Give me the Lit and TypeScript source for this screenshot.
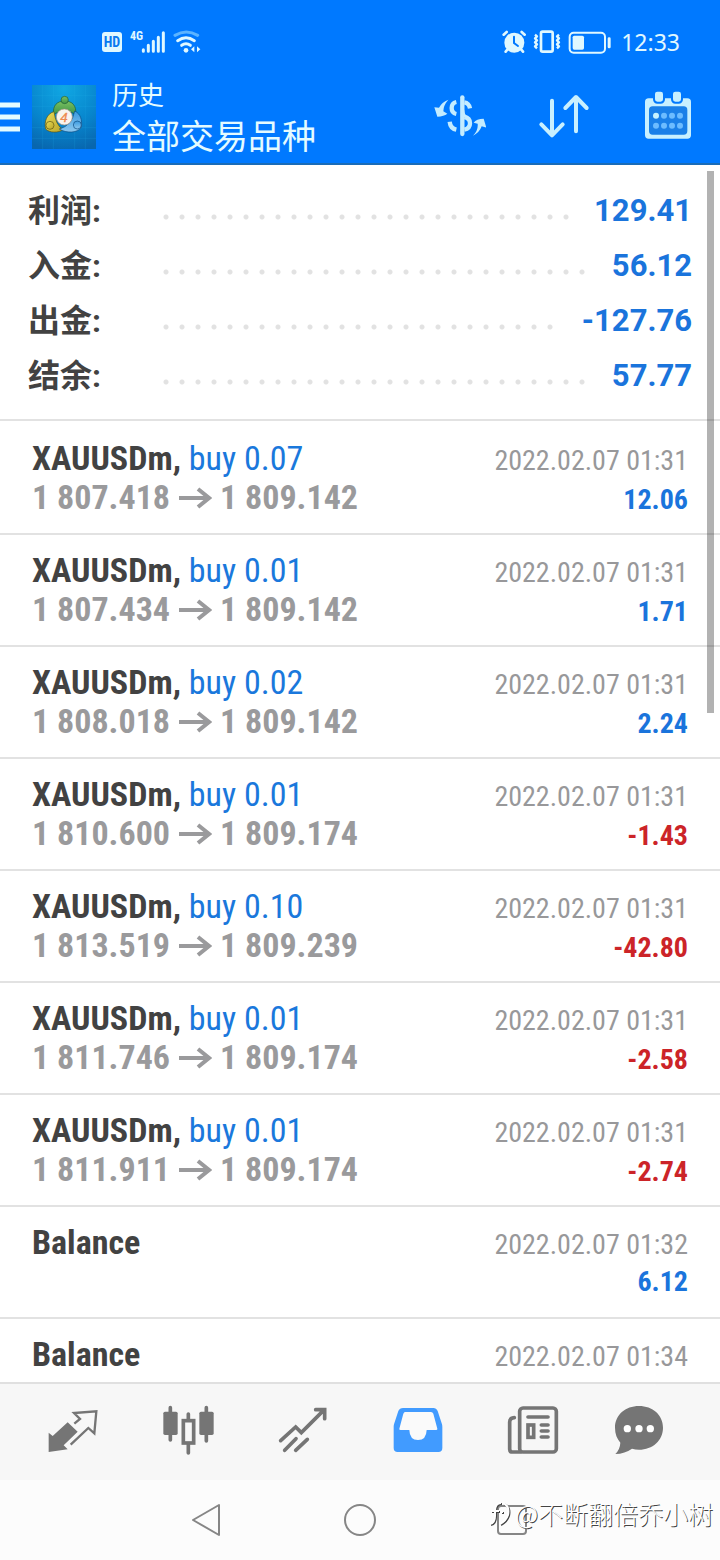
import { LitElement, html, css, svg, nothing } from "lit";
import { customElement, property } from "lit/decorators.js";
import { classMap } from "lit/directives/class-map.js";

interface Deal {
  symbol: string;
  side?: string;
  open?: string;
  close?: string;
  time: string;
  profit?: string;
}

const totals = [
  { label: "利润:", value: "129.41" },
  { label: "入金:", value: "56.12" },
  { label: "出金:", value: "-127.76" },
  { label: "结余:", value: "57.77" },
];

const gold = (side: string, open: string, close: string, profit: string): Deal => ({
  symbol: "XAUUSDm",
  side,
  open,
  close,
  time: "2022.02.07 01:31",
  profit,
});

const deals: Deal[] = [
  gold("buy 0.07", "1 807.418", "1 809.142", "12.06"),
  gold("buy 0.01", "1 807.434", "1 809.142", "1.71"),
  gold("buy 0.02", "1 808.018", "1 809.142", "2.24"),
  gold("buy 0.01", "1 810.600", "1 809.174", "-1.43"),
  gold("buy 0.10", "1 813.519", "1 809.239", "-42.80"),
  gold("buy 0.01", "1 811.746", "1 809.174", "-2.58"),
  gold("buy 0.01", "1 811.911", "1 809.174", "-2.74"),
  { symbol: "Balance", time: "2022.02.07 01:32", profit: "6.12" },
  { symbol: "Balance", time: "2022.02.07 01:34" },
];

@customElement("status-bar")
class StatusBar extends LitElement {
  static styles = css`
    :host {
      display: flex;
      justify-content: space-between;
      align-items: center;
      height: 60px;
      padding: 12px 40px 0 101px;
      color: #e0f8ff;
      font: 23px/32px "Noto Sans", sans-serif;
    }
    .group {
      display: flex;
      align-items: center;
      gap: 7px;
    }
    svg {
      display: block;
      flex: none;
    }
    .tag {
      font: bold 14px "Roboto Condensed", "Roboto", sans-serif;
    }
    .time {
      margin-left: 2px;
    }
  `;

  render() {
    return html`
      <div class="group">
        <svg width="22" height="24" viewBox="0 0 22 24" aria-label="HD">
          <rect x="1" y="2" width="20" height="20" rx="3" fill="#e0f8ff" />
          <text class="tag" x="11" y="17" text-anchor="middle" fill="#0a7af0">HD</text>
        </svg>
        <svg width="36" height="32" viewBox="390 76 108 96" aria-label="4G">
          <text x="390" y="118" font-family="Roboto Condensed, Roboto, sans-serif" font-size="36" font-weight="bold" fill="#e0f8ff">4G</text>
          <g stroke="#e0f8ff" stroke-width="9" stroke-linecap="round">
            <path d="M430 147v5M445 134v18M460 122v30M475 110v42M490 96v56" />
          </g>
        </svg>
        <svg width="28" height="24" viewBox="516 88 84 72" aria-label="Wi-Fi">
          <g fill="none" stroke-width="9" stroke-linecap="round">
            <path d="M522 104q34-20 68 0" stroke="#5cb4ff" />
            <path d="M530 120q25-17 50 0M542 134q13-9 26 0" stroke="#e0f8ff" />
          </g>
          <circle cx="555" cy="149" r="7" fill="#e0f8ff" />
          <path d="M580 137v18l-10-9zM588 137v18l10-9z" fill="#e0f8ff" />
        </svg>
      </div>
      <div class="group">
        <svg width="24" height="24" viewBox="430 88 72 72" aria-label="Alarm">
          <circle cx="467" cy="126" r="30" fill="#e0f8ff" />
          <g fill="none" stroke="#e0f8ff" stroke-width="8" stroke-linecap="round">
            <path d="M435 102l9-8M498 102l-9-8M446 147l-5 6M488 147l5 6" />
          </g>
          <path d="M466 108v19l12 9" fill="none" stroke="#0079ff" stroke-width="6" stroke-linecap="round" />
        </svg>
        <svg width="28" height="24" viewBox="523 88 84 72" aria-label="Vibrate">
          <g fill="none" stroke="#e0f8ff" stroke-width="8" stroke-linejoin="round">
            <rect x="547" y="93" width="35" height="60" rx="5" />
            <path d="M529 102l6 5-6 6 6 6-6 6 6 6-6 6 6 6M601 102l-6 5 6 6-6 6 6 6-6 6 6 6-6 6" stroke-width="7" />
          </g>
        </svg>
        <svg width="44" height="24" viewBox="628 88 132 72" aria-label="Battery">
          <rect x="633" y="96" width="106" height="60" rx="12" fill="none" stroke="#e0f8ff" stroke-width="6" />
          <rect x="642" y="105" width="34" height="42" rx="5" fill="#e0f8ff" />
          <rect x="747" y="110" width="9" height="33" rx="4" fill="#e0f8ff" />
        </svg>
        <span class="time">12:33</span>
      </div>
    `;
  }
}

@customElement("app-toolbar")
class AppToolbar extends LitElement {
  static styles = css`
    :host {
      display: flex;
      align-items: center;
      height: 90px;
      padding: 0 26px 1px 0;
      color: #e4fbff;
      font-family: "Noto Sans CJK SC", sans-serif;
    }
    button {
      flex: none;
      padding: 0;
      border: 0;
      background: none;
      color: inherit;
    }
    svg {
      display: block;
    }
    .logo {
      flex: none;
      margin-left: 12px;
    }
    .titles {
      flex: 1;
      margin-left: 16px;
      padding-bottom: 2px;
      white-space: nowrap;
    }
    h1,
    p {
      margin: 0;
      font-weight: 400;
    }
    h1 {
      font-size: 26px;
      line-height: 38px;
    }
    p {
      font-size: 34px;
      line-height: 44px;
    }
    .actions {
      display: flex;
      gap: 52px;
    }
  `;

  render() {
    return html`
      <button aria-label="Menu">
        <svg width="20" height="30" viewBox="0 0 20 30">
          <path d="M0 3h20M0 15h20M0 27h20" stroke="#e4fbff" stroke-width="5" />
        </svg>
      </button>
      <svg class="logo" width="64" height="64" viewBox="0 0 192 192" aria-label="MetaTrader 4">
        <defs>
          <radialGradient id="sky" cx=".5" cy=".05" r="1">
            <stop offset="0" stop-color="#10a8e4" />
            <stop offset=".6" stop-color="#0784cc" />
            <stop offset="1" stop-color="#0866ae" />
          </radialGradient>
          <linearGradient id="green" x2="0" y2="1">
            <stop offset="0" stop-color="#7cc060" />
            <stop offset="1" stop-color="#3c9448" />
          </linearGradient>
          <linearGradient id="yellow" x2="1" y2="1">
            <stop offset="0" stop-color="#eadc58" />
            <stop offset="1" stop-color="#b8a428" />
          </linearGradient>
          <linearGradient id="blue" x2="0" y2="1">
            <stop offset="0" stop-color="#3a9ae0" />
            <stop offset="1" stop-color="#8cc8f0" />
          </linearGradient>
        </defs>
        <rect width="192" height="192" fill="url(#sky)" />
        <path d="M32 0v192M64 0v192M128 0v192M160 0v192M0 32h192M0 64h192M0 128h192M0 160h192" stroke="#2cb4ec" stroke-opacity=".25" stroke-width="2" />
        <g stroke-width="2">
          <path d="M65 88c-4-26 10-40 33-40s36 14 33 40q-15-10-33-10t-33 10z" fill="url(#green)" stroke="#1c5a34" />
          <circle cx="98" cy="45" r="11" fill="url(#green)" stroke="#1c5a34" />
          <path d="M66 80c-22 6-30 30-25 52 10 12 40 12 52 2q-22-14-27-54z" fill="url(#yellow)" stroke="#5c5410" />
          <circle cx="54" cy="121" r="12" fill="url(#yellow)" stroke="#5c5410" />
          <path d="M128 78c18 8 23 28 20 48-8 18-46 20-66 6q38-10 46-54z" fill="url(#blue)" stroke="#0c4a80" />
          <circle cx="136" cy="120" r="12" fill="url(#blue)" stroke="#0c4a80" />
          <circle cx="97" cy="96" r="24" fill="#f8f4ee" stroke="#a8907c" />
        </g>
        <text x="96" y="110" text-anchor="middle" font-family="Liberation Sans, sans-serif" font-size="40" font-style="italic" fill="#ee8a50" stroke="#ee8a50">4</text>
      </svg>
      <div class="titles">
        <h1>历史</h1>
        <p>全部交易品种</p>
      </div>
      <div class="actions">
        <button aria-label="Currency">
          <svg width="52" height="54" viewBox="221 271 156 162">
            <g fill="none" stroke="#c4ecff">
              <path d="M306 293v110" stroke-width="13" stroke-linecap="round" />
              <path d="M288 307q-14 3-14 18t14 18M268 366q2 20 20 24" stroke-width="13" />
              <path d="M312 308q14 2 17 18M312 352q17 3 17 19t-17 19" stroke-width="13" />
              <path d="M308 332q0 16 12 21" stroke-width="8" />
            </g>
            <path d="M264 300q-20 8-28 24l-14-1 9 28q20-1 30-9l-12-7q0-18 15-35zM338 408q20-10 26-28l14 4-8-27q-22 0-30 12l12 3q2 20-14 36z" fill="#c4ecff" />
          </svg>
        </button>
        <button aria-label="Sort">
          <svg width="52" height="54" viewBox="534 271 156 162">
            <path d="M576 303v103M544 374l32 33 32-33M648 395V294M616 325l32-33 32 33" fill="none" stroke="#c8f0ff" stroke-width="12" stroke-linecap="round" stroke-linejoin="round" />
          </svg>
        </button>
        <button aria-label="Calendar">
          <svg width="52" height="54" viewBox="846 271 156 162">
            <path d="M866 296h116q11 0 11 11v99q0 11-11 11H866q-11 0-11-11v-99q0-11 11-11z" fill="#c8f0ff" />
            <rect x="867" y="320" width="115" height="85" rx="11" fill="#1a80e8" />
            <g fill="#c8f0ff" stroke="#0079ff" stroke-width="6">
              <rect x="882" y="273" width="30" height="36" rx="10" />
              <rect x="936" y="273" width="30" height="36" rx="10" />
            </g>
            <g fill="#6cbcff">
              ${[0, 1, 2, 3].map(
                (i) => svg`
                  <circle cx=${888 + i * 24} cy="348" r="9" fill=${i ? "#6cbcff" : "#c8f4ff"} />
                  <circle cx=${888 + i * 24} cy="378" r="9" />`,
              )}
            </g>
          </svg>
        </button>
      </div>
    `;
  }
}

@customElement("deal-row")
class DealRow extends LitElement {
  @property({ attribute: false }) deal!: Deal;

  static styles = css`
    :host {
      display: grid;
      grid-template-columns: 1fr auto;
      grid-template-rows: 39px 39px;
      align-items: baseline;
      padding: 16px 32px;
      border-bottom: 2px solid #e2e2e2;
      font-family: "Roboto Condensed", "Liberation Sans Narrow", "Roboto", sans-serif;
      font-size: 34px;
      line-height: 39px;
      white-space: nowrap;
    }
    .symbol {
      color: #424242;
      font-weight: 700;
    }
    .side {
      color: #1a78dc;
      font-weight: 400;
    }
    .prices {
      grid-column: 1;
      display: flex;
      align-items: center;
      gap: 8px;
      color: #9a9a9c;
      font-weight: 700;
    }
    .time {
      color: #98989a;
      font-size: 28px;
      text-align: right;
    }
    .profit {
      grid-column: 2;
      color: #1a74dc;
      font-size: 28px;
      font-weight: 700;
      text-align: right;
    }
    .loss {
      color: #cc2428;
    }
  `;

  render() {
    const d = this.deal;
    return html`
      <span class="symbol">${d.symbol}${d.side ? html`, <span class="side">${d.side}</span>` : nothing}</span>
      <time class="time">${d.time}</time>
      ${d.open
        ? html`<span class="prices">
            ${d.open}
            <svg width="34" height="22" viewBox="0 0 34 22" aria-label="to">
              <path d="M1 11h30M20 2l11 9-11 9" fill="none" stroke="#9a9a9c" stroke-width="4" />
            </svg>
            ${d.close}
          </span>`
        : nothing}
      ${d.profit
        ? html`<span class=${classMap({ profit: true, loss: d.profit.startsWith("-") })}>${d.profit}</span>`
        : nothing}
    `;
  }
}

@customElement("tab-bar")
class TabBar extends LitElement {
  static styles = css`
    :host {
      display: grid;
      grid-template-columns: repeat(5, 115fr) 97fr;
      height: 92px;
      padding: 0 33px 4px 15px;
      border-top: 2px solid #e0e0e0;
      background: #f7f7f7;
    }
    button {
      display: grid;
      place-items: center;
      padding: 0;
      border: 0;
      background: none;
    }
  `;

  render() {
    return html`
      <button aria-label="Quotes">
        <svg width="52" height="52" viewBox="143 72 156 156">
          <path d="M148 158l12 10 45-41 30 28-42 41 12 12-57 8z" fill="#757575" />
          <path d="M214 194l53-50 18 16 6-66-67 5 18 18-17 14" fill="none" stroke="#757575" stroke-width="7" />
        </svg>
      </button>
      <button aria-label="Charts">
        <svg width="52" height="52" viewBox="486 72 156 156">
          <g stroke="#757575" stroke-width="11" stroke-linecap="round">
            <path d="M511 83v97M619 83v100M565 102v20M565 190v29" />
          </g>
          <rect x="490" y="95" width="43" height="70" rx="5" fill="#757575" />
          <rect x="598" y="95" width="43" height="70" rx="5" fill="#757575" />
          <rect x="550" y="122" width="31" height="67" fill="#f7f7f7" stroke="#757575" stroke-width="11" />
        </svg>
      </button>
      <button aria-label="Trade">
        <svg width="52" height="52" viewBox="832 72 156 156">
          <path d="M843 182l45-41 17 17 66-66M948 89h27v27M855 211l34-35M888 211l35-33" fill="none" stroke="#757575" stroke-width="11" stroke-linecap="round" />
        </svg>
      </button>
      <button aria-label="History">
        <svg width="52" height="52" viewBox="97 72 156 156">
          <path d="M130 84h91q9 0 13 9l13 40q1 3 1 8v63q0 12-12 12H114q-12 0-12-12v-63q0-5 1-8l13-40q4-9 14-9z" fill="#419bff" />
          <path d="M136 96h78q5 0 7 5l12 45q1 4-4 4h-28q-1 30-26 30t-26-30h-26q-5 0-4-4l12-45q2-5 5-5z" fill="#fafafa" />
        </svg>
      </button>
      <button aria-label="News">
        <svg width="52" height="52" viewBox="443 72 156 156">
          <g fill="none" stroke="#757575" stroke-width="11">
            <rect x="481" y="84" width="110" height="132" rx="10" />
            <path d="M484 216h-25q-8 0-8-8v-82q0-12 14-13" stroke-linecap="round" />
            <path d="M506 111h60M546 135h20M546 153h20M546 171h20" stroke-linecap="round" />
            <rect x="506" y="135" width="17" height="37" />
          </g>
        </svg>
      </button>
      <button aria-label="Messages">
        <svg width="52" height="52" viewBox="759 72 156 156">
          <path d="M837 78c41 0 72 27 72 65s-31 66-72 66q-11 0-21-3-21 15-50 16 14-14 15-34c-10-12-16-26-16-45 0-38 31-65 72-65z" fill="#757575" />
          <g fill="#fff">
            <circle cx="802" cy="146" r="11" />
            <circle cx="837" cy="146" r="11" />
            <circle cx="871" cy="146" r="11" />
          </g>
        </svg>
      </button>
    `;
  }
}

@customElement("system-nav")
class SystemNav extends LitElement {
  static styles = css`
    :host {
      position: relative;
      display: flex;
      justify-content: center;
      align-items: center;
      gap: 120px;
      height: 80px;
      background: #fcfcfc;
    }
    button {
      padding: 0;
      border: 0;
      background: none;
    }
    svg {
      display: block;
      fill: none;
      stroke: #868686;
      stroke-width: 2;
      stroke-linejoin: round;
    }
    .credit {
      position: absolute;
      right: 7px;
      bottom: 29px;
      display: flex;
      align-items: center;
      gap: 4px;
      color: #fff;
      font: 300 25px/36px "Noto Sans CJK SC", sans-serif;
      text-shadow: 1px 1px 0 #444;
    }
    .credit svg {
      filter: drop-shadow(1px 1px 0 #444);
      stroke: #fff;
      stroke-width: 2;
    }
  `;

  render() {
    return html`
      <button aria-label="Back">
        <svg width="32" height="34" viewBox="0 0 32 34"><path d="M28 2v30L2 17z" /></svg>
      </button>
      <button aria-label="Home">
        <svg width="34" height="34" viewBox="0 0 34 34"><circle cx="17" cy="17" r="15" /></svg>
      </button>
      <button aria-label="Recent apps">
        <svg width="32" height="34" viewBox="0 0 32 34"><rect x="1" y="3" width="28" height="28" rx="3" /></svg>
      </button>
      <div class="credit">
        <svg width="22" height="26" viewBox="0 0 22 26">
          <path d="M12 3Q6 3 6 11v5q0 7-5 8M2 11h8M12 12h2M14 3q7 3 5 12-2 6-8 9" />
        </svg>
        <span>@不断翻倍乔小树</span>
      </div>
    `;
  }
}

@customElement("app-root")
class AppRoot extends LitElement {
  static styles = css`
    :host {
      display: flex;
      flex-direction: column;
      height: 100vh;
      background: #fff;
    }
    header {
      flex: none;
      border-bottom: 2px solid #1a6cb8;
      background: #0079ff;
    }
    main {
      position: relative;
      flex: 1;
      min-height: 0;
      overflow: hidden;
    }
    .totals {
      margin: 0 0 2px;
      padding: 18px 28px 16px;
      border-bottom: 2px solid #e2e2e2;
      font-family: "Roboto", "Noto Sans CJK SC", sans-serif;
      font-size: 31px;
      line-height: 55px;
      font-weight: 700;
    }
    .total {
      display: grid;
      grid-template-columns: 130px 1fr auto;
    }
    .label {
      padding-top: 2px;
      color: #424242;
      font-size: 32px;
      line-height: 53px;
    }
    .leader {
      margin-right: 20px;
      background: radial-gradient(circle at 8px 34px, #e2e2e2 2px, transparent 3px) 0 0 / 16px 55px repeat-x;
    }
    .value {
      margin: 0;
      color: #1a74dc;
    }
    .thumb {
      position: absolute;
      top: 6px;
      right: 6px;
      width: 7px;
      height: 542px;
      background: rgba(0, 0, 0, 0.3);
    }
    tab-bar,
    system-nav {
      flex: none;
    }
  `;

  render() {
    return html`
      <header>
        <status-bar></status-bar>
        <app-toolbar></app-toolbar>
      </header>
      <main>
        <dl class="totals">
          ${totals.map(
            (t) => html`<div class="total">
              <dt class="label">${t.label}</dt>
              <span class="leader"></span>
              <dd class="value">${t.value}</dd>
            </div>`,
          )}
        </dl>
        ${deals.map((d) => html`<deal-row .deal=${d}></deal-row>`)}
        <div class="thumb"></div>
      </main>
      <tab-bar></tab-bar>
      <system-nav></system-nav>
    `;
  }
}
